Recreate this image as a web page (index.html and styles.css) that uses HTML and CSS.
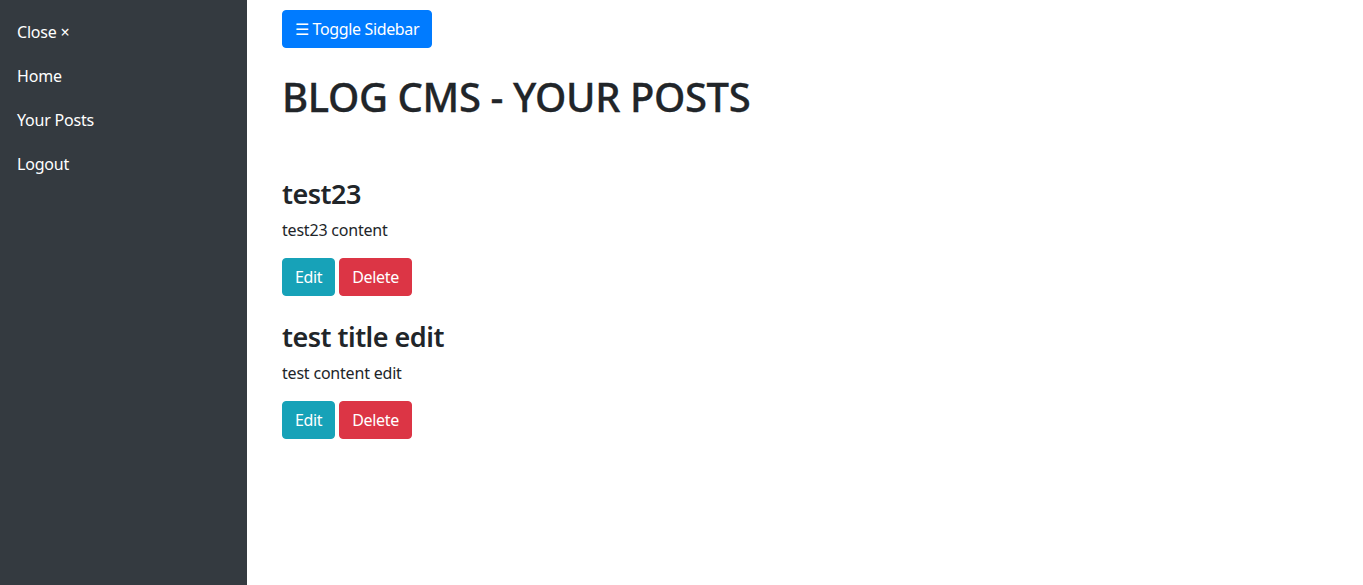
FILE: index.html
```html
<!DOCTYPE html>
<html lang="en">
<head>
<meta charset="utf-8">
<title>Blog CMS</title>
<link rel="stylesheet" href="styles.css">
</head>
<body>
<div class="layout">
  <nav class="sidebar">
    <a class="side-link" href="#">Close ×</a>
    <a class="side-link" href="#">Home</a>
    <a class="side-link" href="#">Your Posts</a>
    <a class="side-link" href="#">Logout</a>
  </nav>
  <main class="main">
    <div><button class="btn btn-primary">☰ Toggle Sidebar</button></div>
    <h1 class="page-title">BLOG CMS - YOUR POSTS</h1>
    <div class="posts">
      <div class="post">
        <h3 class="post-title">test23</h3>
        <p class="post-content">test23 content</p>
        <div class="actions">
          <button class="btn btn-info">Edit</button>
          <button class="btn btn-danger">Delete</button>
        </div>
      </div>
      <div class="post">
        <h3 class="post-title">test title edit</h3>
        <p class="post-content">test content edit</p>
        <div class="actions">
          <button class="btn btn-info">Edit</button>
          <button class="btn btn-danger">Delete</button>
        </div>
      </div>
    </div>
  </main>
</div>
</body>
</html>
```

FILE: styles.css
```css
* { box-sizing: border-box; }
html, body { margin: 0; padding: 0; }
body {
  font-family: "Noto Sans", "Open Sans", sans-serif;
  font-size: 16px;
  line-height: 1.5;
  color: #212529;
  background: #fff;
}
.layout {
  display: flex;
  min-height: 585px;
}
.sidebar {
  width: 247px;
  flex: 0 0 247px;
  background: #343a40;
  display: flex;
  flex-direction: column;
  padding-top: 10px;
}
.side-link {
  display: block;
  padding: 10px 17px;
  color: #fff;
  text-decoration: none;
  line-height: 24px;
  letter-spacing: -0.2px;
}
.main {
  flex: 1;
  padding: 10px 35px;
}
.btn {
  display: inline-block;
  font-family: inherit;
  font-size: 16px;
  line-height: 24px;
  padding: 6px 12px;
  border: 1px solid transparent;
  border-radius: 4px;
  color: #fff;
  cursor: pointer;
  letter-spacing: -0.35px;
}
.btn-primary { background: #007bff; border-color: #007bff; }
.btn-info { background: #17a2b8; border-color: #17a2b8; }
.btn-danger { background: #dc3545; border-color: #dc3545; }
.page-title {
  font-size: 40px;
  font-weight: 500;
  line-height: 48px;
  margin: 25px 0 55px;
  letter-spacing: -0.4px;
  -webkit-text-stroke: 0.3px #212529;
}
.post { margin-bottom: 23px; }
.post-title {
  font-size: 27px;
  font-weight: 600;
  line-height: 34px;
  margin: 0 0 8px;
  letter-spacing: -0.5px;
  position: relative;
  top: 1px;
}
.post-content { margin: 0 0 16px; letter-spacing: -0.2px; }
.actions { display: flex; gap: 4px; }
```
